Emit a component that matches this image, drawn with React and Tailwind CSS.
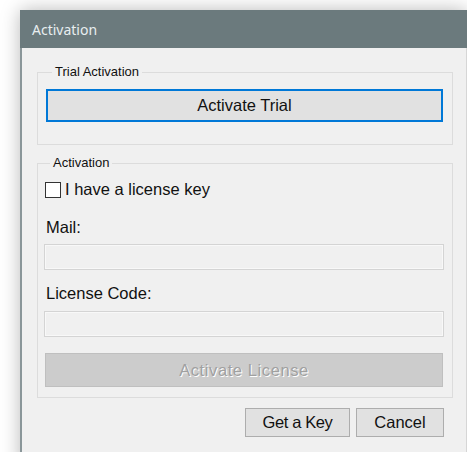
export default function App() {
  const sans = { fontFamily: '"Liberation Sans", Arial, sans-serif' };
  return (
    <div className="w-[467px] h-[452px] bg-white overflow-hidden pl-[20px] pt-[10px]">
      <div className="w-[447px] h-[460px] flex flex-col shadow-[0_0_18px_rgba(0,0,0,0.28)]">
        {/* title bar */}
        <div
          className="h-[38px] shrink-0 bg-[#6b7a7d] text-[#e8eef0] text-[14px] flex items-center pl-[12px]"
          style={{ fontFamily: '"Noto Sans", sans-serif' }}
        >
          Activation
        </div>

        {/* dialog body */}
        <div
          className="flex-1 bg-[#f0f0f0] border-l-2 border-l-[#8a9699] border-r border-r-[#d6d6d6] flex flex-col pl-[15px] pt-[16px] text-[#111]"
          style={sans}
        >
          {/* trial group */}
          <fieldset className="w-[416px] border border-[#dcdcdc] px-[8px] pb-[22px]">
            <legend className="ml-[6px] px-[3px] text-[13px] leading-[16px]">Trial Activation</legend>
            <button className="mt-[9px] w-[397px] h-[33px] bg-[#e1e1e1] border-2 border-[#0078d7] text-[16.5px] leading-[19px]">
              Activate Trial
            </button>
          </fieldset>

          {/* license group */}
          <fieldset className="mt-[10px] w-[416px] border border-[#dcdcdc] pl-[6px] pb-[10px] flex flex-col">
            <legend className="ml-[6px] px-[3px] text-[13px] leading-[16px]">Activation</legend>

            <label className="mt-[9px] flex items-center gap-[4px] text-[16.5px] leading-[19px]">
              <span className="ml-[1px] w-[16px] h-[16px] border border-[#333333] bg-white shrink-0" />
              <span>I have a license key</span>
            </label>

            <div className="mt-[19px] ml-[2px] text-[16.5px] leading-[19px]">Mail:</div>
            <div className="mt-[7px] w-[400px] h-[26px] border border-[#d4d4d4] bg-[#f0f0f0] shadow-[inset_0_0_0_1px_#f8f8f8]" />

            <div className="mt-[14px] ml-[2px] text-[16.5px] leading-[19px]">License Code:</div>
            <div className="mt-[8px] w-[400px] h-[26px] border border-[#d4d4d4] bg-[#f0f0f0] shadow-[inset_0_0_0_1px_#f8f8f8]" />

            <button
              disabled
              className="mt-[16px] ml-[1px] w-[398px] h-[34px] bg-[#cccccc] border border-[#bfbfbf] text-[16.5px] leading-[19px] tracking-[0.6px] text-[#a0a0a0] [text-shadow:1px_1px_0_#ffffff]"
            >
              Activate License
            </button>
          </fieldset>

          {/* footer buttons */}
          <div className="mt-[10px] w-[407px] flex justify-end gap-[6px]">
            <button className="w-[105px] h-[29px] bg-[#e1e1e1] border border-[#adadad] text-[16.5px] leading-[19px] tracking-[-0.4px]">
              Get a Key
            </button>
            <button className="w-[88px] h-[29px] bg-[#e1e1e1] border border-[#adadad] text-[16.5px] leading-[19px]">
              Cancel
            </button>
          </div>
        </div>
      </div>
    </div>
  );
}
